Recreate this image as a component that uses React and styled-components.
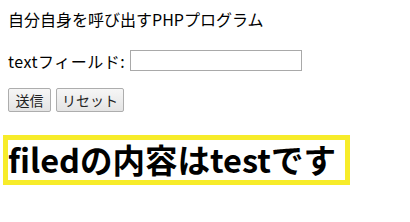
import styled, { createGlobalStyle } from 'styled-components'

const GlobalStyle = createGlobalStyle`
   html, body {
      margin: 0;
      padding: 0;
      background: #fff;
   }
   body {
      font-family: "Noto Sans CJK JP", "Noto Sans", sans-serif;
      color: #000;
   }
`

const Page = styled.div`
   display: flex;
   flex-direction: column;
   align-items: flex-start;
   padding: 0 8px;
`

const Title = styled.p`
   margin: 9px 0 0;
   font-size: 16px;
   line-height: 20px;
`

const Form = styled.form`
   display: flex;
   flex-direction: column;
   align-items: flex-start;
`

const FieldRow = styled.label`
   display: flex;
   align-items: center;
   gap: 5px;
   margin-top: 21px;
   height: 21px;
   font-size: 16px;
   letter-spacing: 0.5px;
`

const TextInput = styled.input`
   box-sizing: border-box;
   width: 172px;
   height: 21px;
   border: 1px solid #a9a9a9;
   padding: 1px 3px;
   font-size: 13px;
`

const Buttons = styled.div`
   display: flex;
   gap: 5px;
   margin-top: 17px;
`

const Button = styled.button`
   box-sizing: border-box;
   height: 24px;
   width: ${(props) => props.width};
   padding: 0;
   border: 1px solid #adadad;
   border-radius: 2px;
   background: linear-gradient(#f6f6f6, #e4e4e4);
   font-family: "Noto Sans CJK JP", sans-serif;
   font-size: 14px;
   color: #222;
`

const Result = styled.div`
   box-sizing: border-box;
   margin: 23px 0 0 -5px;
   width: 347px;
   height: 50px;
   border: 5px solid #f7ec2a;
   font-size: 32.5px;
   font-weight: 700;
   line-height: 38px;
   white-space: nowrap;
   overflow: hidden;
`

export default function App() {
   return (
      <Page>
         <GlobalStyle />
         <Title>自分自身を呼び出すPHPプログラム</Title>
         <Form onSubmit={(e) => e.preventDefault()}>
            <FieldRow>
               textフィールド:
               <TextInput type="text" name="field" />
            </FieldRow>
            <Buttons>
               <Button type="submit" width="43px">送信</Button>
               <Button type="reset" width="68px">リセット</Button>
            </Buttons>
         </Form>
         <Result>filedの内容はtestです</Result>
      </Page>
   )
}
